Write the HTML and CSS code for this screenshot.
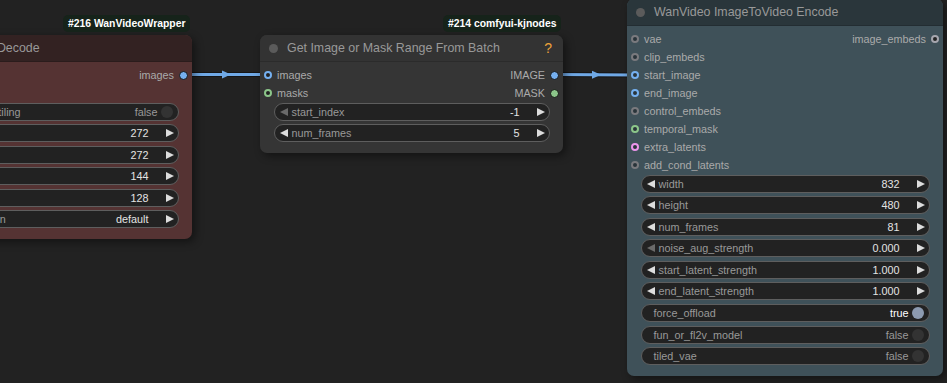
FILE: index.html
```html
<!DOCTYPE html>
<html lang="en">

<head>
    <meta charset="UTF-8">
    <meta name="viewport" content="width=device-width, initial-scale=1.0">
    <title>WanVideo graph</title>
    <link rel="stylesheet" href="styles.css">
</head>

<body>
    <div class="graph">
        <!-- links are drawn under the nodes -->
        <svg class="links" width="947" height="383" viewBox="0 0 947 383">
            <path class="link-edge" d="M184 74.5 L268 74.5" />
            <path class="link" d="M184 74.5 L268 74.5" />
            <polygon class="link-arrow" points="222,70.5 231,74.5 222,78.5" />
            <path class="link-edge" d="M555 74.5 L635 75" />
            <path class="link" d="M555 74.5 L635 75" />
            <polygon class="link-arrow" points="592,70.7 601,74.7 592,78.7" />
        </svg>

        <!-- WanVideo Decode -->
        <div class="node node-decode red">
            <div class="badge">#216 WanVideoWrapper</div>
            <div class="node-title"><i class="title-dot"></i>WanVideo Decode</div>
            <div class="node-body">
                <div class="slots">
                    <div class="slot-row">
                        <span class="slot in"><i class="dot ring gray"></i>vae</span>
                        <span class="slot out">images<i class="dot fill blue"></i></span>
                    </div>
                    <div class="slot-row">
                        <span class="slot in"><i class="dot ring pink"></i>samples</span>
                    </div>
                </div>
                <div class="widgets">
                    <div class="widget toggle"><span class="label">enable_vae_tiling</span><span class="value">false</span><i class="knob"></i></div>
                    <div class="widget num"><i class="arrow left"></i><span class="label">tile_x</span><span class="value">272</span><i class="arrow right"></i></div>
                    <div class="widget num"><i class="arrow left"></i><span class="label">tile_y</span><span class="value">272</span><i class="arrow right"></i></div>
                    <div class="widget num"><i class="arrow left"></i><span class="label">tile_stride_x</span><span class="value">144</span><i class="arrow right"></i></div>
                    <div class="widget num"><i class="arrow left"></i><span class="label">tile_stride_y</span><span class="value">128</span><i class="arrow right"></i></div>
                    <div class="widget num"><i class="arrow left"></i><span class="label">normalization</span><span class="value">default</span><i class="arrow right"></i></div>
                </div>
            </div>
        </div>

        <!-- Get Image or Mask Range From Batch -->
        <div class="node node-range">
            <div class="badge">#214 comfyui-kjnodes</div>
            <div class="node-title"><i class="title-dot"></i>Get Image or Mask Range From Batch<span class="help">?</span></div>
            <div class="node-body">
                <div class="slots">
                    <div class="slot-row">
                        <span class="slot in"><i class="dot ring blue"></i>images</span>
                        <span class="slot out">IMAGE<i class="dot fill blue"></i></span>
                    </div>
                    <div class="slot-row">
                        <span class="slot in"><i class="dot ring green"></i>masks</span>
                        <span class="slot out">MASK<i class="dot fill green"></i></span>
                    </div>
                </div>
                <div class="widgets">
                    <div class="widget num"><i class="arrow left dim"></i><span class="label">start_index</span><span class="value">-1</span><i class="arrow right"></i></div>
                    <div class="widget num"><i class="arrow left"></i><span class="label">num_frames</span><span class="value">5</span><i class="arrow right"></i></div>
                </div>
            </div>
        </div>

        <!-- WanVideo ImageToVideo Encode -->
        <div class="node node-encode pale-blue">
            <div class="node-title"><i class="title-dot"></i>WanVideo ImageToVideo Encode</div>
            <div class="node-body">
                <div class="slots">
                    <div class="slot-row">
                        <span class="slot in"><i class="dot ring gray"></i>vae</span>
                        <span class="slot out">image_embeds<i class="dot ring light"></i></span>
                    </div>
                    <div class="slot-row"><span class="slot in"><i class="dot ring gray"></i>clip_embeds</span></div>
                    <div class="slot-row"><span class="slot in"><i class="dot ring blue"></i>start_image</span></div>
                    <div class="slot-row"><span class="slot in"><i class="dot ring blue"></i>end_image</span></div>
                    <div class="slot-row"><span class="slot in"><i class="dot ring gray"></i>control_embeds</span></div>
                    <div class="slot-row"><span class="slot in"><i class="dot ring green"></i>temporal_mask</span></div>
                    <div class="slot-row"><span class="slot in"><i class="dot ring pink"></i>extra_latents</span></div>
                    <div class="slot-row"><span class="slot in"><i class="dot ring gray"></i>add_cond_latents</span></div>
                </div>
                <div class="widgets">
                    <div class="widget num"><i class="arrow left"></i><span class="label">width</span><span class="value">832</span><i class="arrow right"></i></div>
                    <div class="widget num"><i class="arrow left"></i><span class="label">height</span><span class="value">480</span><i class="arrow right"></i></div>
                    <div class="widget num"><i class="arrow left"></i><span class="label">num_frames</span><span class="value">81</span><i class="arrow right"></i></div>
                    <div class="widget num"><i class="arrow left dim"></i><span class="label">noise_aug_strength</span><span class="value">0.000</span><i class="arrow right"></i></div>
                    <div class="widget num"><i class="arrow left"></i><span class="label">start_latent_strength</span><span class="value">1.000</span><i class="arrow right"></i></div>
                    <div class="widget num"><i class="arrow left"></i><span class="label">end_latent_strength</span><span class="value">1.000</span><i class="arrow right"></i></div>
                    <div class="widget toggle on"><span class="label">force_offload</span><span class="value">true</span><i class="knob"></i></div>
                    <div class="widget toggle"><span class="label">fun_or_fl2v_model</span><span class="value">false</span><i class="knob"></i></div>
                    <div class="widget toggle"><span class="label">tiled_vae</span><span class="value">false</span><i class="knob"></i></div>
                </div>
            </div>
        </div>
    </div>
</body>

</html>
```

FILE: styles.css
```css
html,
body {
    margin: 0;
    height: 100%;
}

body {
    background: #222;
    font-family: 'Liberation Sans', Arial, sans-serif;
    overflow: hidden;
}

.graph {
    position: relative;
    width: 947px;
    height: 383px;
}

/* links */
.links {
    position: absolute;
    left: 0;
    top: 0;
}

.link-edge {
    stroke: #151515;
    stroke-width: 5;
    fill: none;
}

.link {
    stroke: #70a9e6;
    stroke-width: 3;
    fill: none;
}

.link-arrow {
    fill: #70a9e6;
}

/* nodes sit on a free canvas */
.node {
    position: absolute;
    background: #353535;
    border-radius: 7px;
    box-shadow: 3px 3px 8px rgba(0, 0, 0, 0.45);
}

.node-decode {
    left: -90px;
    top: 35px;
    width: 282px;
}

.node-range {
    left: 260px;
    top: 35px;
    width: 303px;
}

.node-encode {
    left: 627px;
    top: -1px;
    width: 316px;
}

.node-title {
    height: 27px;
    display: flex;
    align-items: center;
    padding: 0 11px 0 8.5px;
    background: #333;
    border-radius: 7px 7px 0 0;
    border-bottom: 1px solid rgba(0, 0, 0, 0.15);
    box-sizing: border-box;
    font-size: 12.4px;
    color: #999;
    white-space: nowrap;
}

.title-dot {
    width: 9px;
    height: 9px;
    border-radius: 50%;
    background: #5b5b5b;
    margin-right: 9.5px;
    flex: none;
}

.help {
    margin-left: auto;
    color: #eba23a;
    font-size: 14px;
}

.red {
    background: #553333;
}

.red .node-title {
    background: #332222;
}

.pale-blue {
    background: #3f5159;
}

.pale-blue .node-title {
    background: #2a363b;
}

/* badge above the node */
.badge {
    position: absolute;
    right: 2px;
    bottom: 100%;
    margin-bottom: 3px;
    height: 17px;
    line-height: 17px;
    padding: 0 4.5px;
    border-radius: 5px;
    background: #16231a;
    color: #fff;
    font-size: 10.4px;
    font-weight: bold;
    white-space: nowrap;
}

.node-body {
    padding: 4px 0 10.5px;
}

/* slots */
.slot-row {
    height: 18px;
    display: flex;
    align-items: center;
    justify-content: space-between;
    font-size: 10.8px;
    color: #aaa;
}

.slot {
    display: flex;
    align-items: center;
    gap: 5px;
    white-space: nowrap;
}

.slot.in {
    padding-left: 4px;
}

.slot.out {
    padding-right: 4px;
    margin-left: auto;
}

.dot {
    width: 8px;
    height: 8px;
    border-radius: 50%;
    box-sizing: border-box;
    flex: none;
}

.dot.ring {
    border: 2px solid;
    background: rgba(0, 0, 0, 0.35);
}

.dot.fill {
    width: 9px;
    height: 9px;
    border: 1px solid #151515;
}

.dot.gray {
    border-color: #7a7a7e;
}

.dot.light {
    border-color: #a6a6ae;
    background: #242424;
}

.dot.ring.blue {
    border-color: #75b0f0;
}

.dot.fill.blue {
    background: #75b0f0;
}

.dot.ring.green {
    border-color: #8cc68a;
}

.dot.fill.green {
    background: #8cc68a;
}

.dot.pink {
    border-color: #ec95ec;
}

/* widgets */
.widgets {
    display: flex;
    flex-direction: column;
    gap: 3.6px;
    padding: 0.5px 13.5px 0;
}

.widget {
    height: 18px;
    box-sizing: border-box;
    display: flex;
    align-items: center;
    background: #222;
    border: 1px solid #5e5e5e;
    border-radius: 9px;
    font-size: 10.8px;
    white-space: nowrap;
    overflow: hidden;
}

.widget .label {
    color: #999;
}

.widget .value {
    margin-left: auto;
    color: #e4e4e4;
}

.widget.num {
    padding: 0 4px 0 5px;
}

.widget.num .label {
    margin-left: 4px;
}

.widget.num .value {
    margin-right: 17px;
}

.arrow {
    width: 0;
    height: 0;
    flex: none;
    border-top: 4.5px solid transparent;
    border-bottom: 4.5px solid transparent;
}

.arrow.left {
    border-right: 8px solid #ddd;
}

.arrow.left.dim {
    border-right-color: #6a6a6a;
}

.arrow.right {
    border-left: 8px solid #ddd;
}

.widget.toggle {
    padding: 0 5px 0 12px;
}

.widget.toggle .value {
    color: #999;
    margin-right: 3px;
}

.widget.toggle.on .value {
    color: #fff;
}

.knob {
    width: 12px;
    height: 12px;
    border-radius: 50%;
    background: #333;
    flex: none;
}

.toggle.on .knob {
    background: #8c9ab0;
}
```
